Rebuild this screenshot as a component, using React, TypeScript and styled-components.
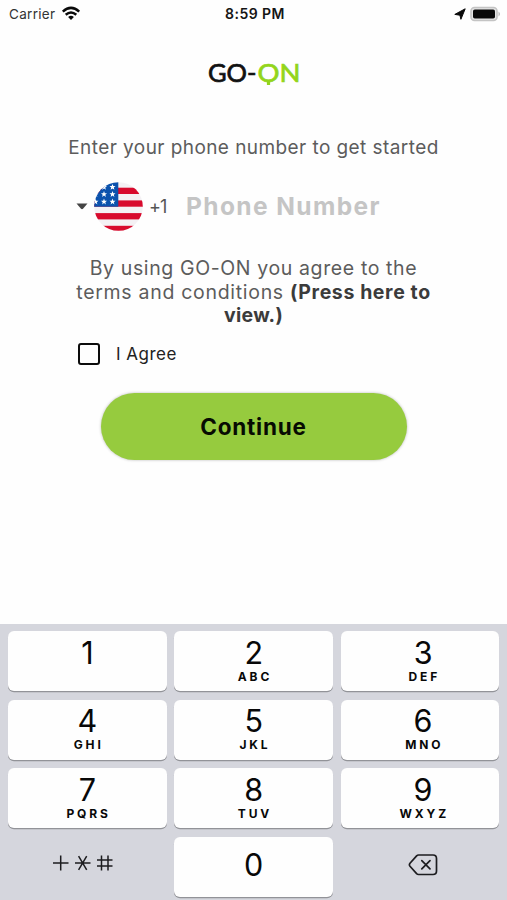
import React from "react";
import styled, { createGlobalStyle } from "styled-components";

const Global = createGlobalStyle`
  * { box-sizing: border-box; }
  body { margin: 0; background: #fefefe; font-family: Inter, "Liberation Sans", sans-serif; }
`;

const Screen = styled.div`
  width: 507px;
  height: 900px;
  display: flex;
  flex-direction: column;
  overflow: hidden;
  background: #fefefe;
`;

const StatusBar = styled.header`
  height: 28px;
  display: grid;
  grid-template-columns: 1fr auto 1fr;
  align-items: center;
  padding: 0 6px 0 9px;
  font-size: 13.5px;
  color: #151515;
`;

const StatusGroup = styled.div<{ $end?: boolean }>`
  display: flex;
  align-items: center;
  gap: ${(p) => (p.$end ? 4 : 6)}px;
  padding-bottom: 1px;
  justify-content: ${(p) => (p.$end ? "flex-end" : "flex-start")};
`;

const Carrier = styled.span`
  color: #333;
  letter-spacing: 0.3px;
`;

const Clock = styled.span`
  padding-bottom: 1px;
  font-size: 14px;
  font-weight: 600;
  letter-spacing: 0.45px;
`;

const Form = styled.main`
  flex: 1;
  display: flex;
  flex-direction: column;
  align-items: center;
`;

const Logo = styled.svg`
  display: block;
  margin-top: 30px;
`;

const Prompt = styled.p`
  margin: 46px 0 0;
  height: 24px;
  line-height: 24px;
  font-size: 19px;
  letter-spacing: 0.43px;
  font-weight: 400;
  color: #5c5c5c;
  white-space: nowrap;
`;

const PhoneRow = styled.div`
  width: 353px;
  height: 50px;
  margin-top: 21px;
  display: flex;
  align-items: center;
`;

const Caret = styled.svg`
  margin-left: -1px;
`;

const Flag = styled.svg`
  margin: 0 6px 0 6px;
`;

const DialCode = styled.span`
  width: 37px;
  font-size: 18px;
  letter-spacing: -1px;
  color: #555;
`;

const PhoneInput = styled.input`
  width: 230px;
  padding: 0;
  border: 0;
  outline: 0;
  background: transparent;
  font: 700 24.5px Inter, sans-serif;
  letter-spacing: 1.4px;
  &::placeholder { color: #c5c5c5; opacity: 1; }
`;

const Terms = styled.p`
  margin: 26px 0 0;
  text-align: center;
  font-size: 19.5px;
  line-height: 23.7px;
  color: #5c5c5c;
  white-space: nowrap;
`;

const TermsLine = styled.span<{ $spacing: number }>`
  display: block;
  letter-spacing: ${(p) => p.$spacing}px;
`;

const TermsLink = styled.b<{ $spacing: number }>`
  color: #3b3b3b;
  font-weight: 700;
  letter-spacing: ${(p) => p.$spacing}px;
`;

const AgreeRow = styled.label`
  width: 351px;
  height: 24px;
  margin-top: 14px;
  display: flex;
  align-items: center;
  gap: 16px;
  font-size: 17px;
  letter-spacing: 0.5px;
  color: #222;
`;

const Checkbox = styled.span`
  width: 22px;
  height: 22px;
  border: 2px solid #0c0c0c;
  border-radius: 3px;
`;

const ContinueButton = styled.button`
  width: 306px;
  height: 67px;
  margin-top: 27px;
  padding: 0;
  border: 0;
  border-radius: 34px;
  background: #96cb3e;
  box-shadow: 0 0 3px rgba(0, 0, 0, 0.28);
  font: 700 22.5px Inter, sans-serif;
  letter-spacing: 0.8px;
  color: #070b02;
`;

const Keypad = styled.section`
  height: 276px;
  padding: 7px 7.5px 0 8px;
  display: grid;
  grid-template-columns: repeat(3, 1fr);
  grid-auto-rows: 60px;
  gap: 8.6px 7.5px;
  background: #d5d6dd;
`;

const Key = styled.button<{ $plain?: boolean; $center?: boolean }>`
  display: flex;
  flex-direction: column;
  align-items: center;
  justify-content: ${(p) => (p.$center ? "center" : "flex-start")};
  padding: ${(p) => (p.$center ? "0 0 4px" : "3.5px 0 0")};
  border: 0;
  border-radius: 6px;
  font-family: Inter, sans-serif;
  color: #080808;
  background: ${(p) => (p.$plain ? "transparent" : "#fefefe")};
  box-shadow: ${(p) => (p.$plain ? "none" : "0 1.2px 0 #929398")};
  &:nth-child(3n) { padding-left: 6px; }
`;

const Digit = styled.span`
  font-size: 30.5px;
  line-height: 35px;
`;

const Letters = styled.span`
  margin-left: 2.5px;
  font-size: 12px;
  line-height: 14px;
  font-weight: 700;
  letter-spacing: 2.9px;
`;

const keys: [string, string][] = [
  ["1", ""], ["2", "ABC"], ["3", "DEF"],
  ["4", "GHI"], ["5", "JKL"], ["6", "MNO"],
  ["7", "PQRS"], ["8", "TUV"], ["9", "WXYZ"],
];

const WifiIcon = () => (
  <svg width="20" height="15" viewBox="0 0 19 15" fill="none" stroke="#0a0a0a" strokeWidth="2.5">
    <path d="M1.3 5.6Q9.5-1.8 17.7 5.6" />
    <path d="M4.2 8.7Q9.5 4.2 14.8 8.7" />
    <path d="M6.6 10.9Q9.5 8.7 12.4 10.9L9.5 14Z" fill="#0a0a0a" stroke="none" />
  </svg>
);

const LocationIcon = () => (
  <svg width="12" height="12" viewBox="0 0 12 12">
    <path d="M11.2.8 6.9 11.3 5.9 7.2.8 6.4Z" fill="#0a0a0a" stroke="#0a0a0a" strokeWidth="1" strokeLinejoin="round" />
  </svg>
);

const BatteryIcon = () => (
  <svg width="31" height="16" viewBox="0 0 31 16">
    <rect x="1" y="1.5" width="26" height="13" rx="3.5" fill="#e4e4e4" stroke="#c4c4c4" strokeWidth="1.6" />
    <rect x="3" y="3.5" width="22" height="9" rx="1.8" fill="#080808" />
    <path d="M28.5 5.6Q31.5 8 28.5 10.4Z" fill="#b8b8b8" />
  </svg>
);

const GoOnLogo = () => (
  <Logo width="94" height="32" viewBox="0 0 94 32" fontFamily="Lato, sans-serif" fontSize="25.5" fontWeight="400" strokeWidth="0.7">
    <text x="1" y="24.2" textLength="48.5" lengthAdjust="spacingAndGlyphs" fill="#111" stroke="#111">GO-</text>
    <text x="50.5" y="24.2" textLength="43" lengthAdjust="spacingAndGlyphs" fill="#93d51b" stroke="#93d51b">ON</text>
    <path d="M61.5 22.5V27" stroke="#93d51b" strokeWidth="3.2" />
  </Logo>
);

const star = "M0-3.1.8-.9 3-.9 1.3.5 1.9 2.7 0 1.4-1.9 2.7-1.3.5-3-.9-.8-.9Z";
const stars = [[10, 5], [18.5, 5], [1.5, 12.2], [10, 12.2], [18.5, 12.2], [1.5, 19.7], [10, 19.7], [18.5, 19.7]];

const UsFlag = () => (
  <Flag width="49" height="49" viewBox="0 0 49 49">
    <defs><clipPath id="flagCircle"><circle cx="24.5" cy="24.5" r="24.3" /></clipPath></defs>
    <g clipPath="url(#flagCircle)">
      <rect width="49" height="49" fill="#f4f1f4" />
      {[5.7, 18.4, 31.1, 43.8].map((y) => (
        <rect key={y} y={y} width="49" height="6.3" fill="#d80a2d" />
      ))}
      <rect width="24.3" height="24.7" fill="#0b52ad" />
      {stars.map(([x, y]) => (
        <path key={`${x}-${y}`} d={star} transform={`translate(${x} ${y})`} fill="#fff" />
      ))}
    </g>
  </Flag>
);

const Symbols = styled.svg`
  margin: 0 8px 4px 0;
`;

const SymbolsIcon = () => (
  <Symbols width="60" height="18" viewBox="0 0 60 18" fill="none" stroke="#1c1c1f" strokeWidth="1.5">
    <path d="M0 9H15.5M7.7 1.5V16.5" />
    <path d="M22 9H37.5M25.6 2.2 33.7 15.8M33.7 2.2 25.6 15.8" />
    <path d="M44 6H59.5M44 12H59.5M48.5 1.5V16.5M55 1.5V16.5" />
  </Symbols>
);

const DeleteIcon = () => (
  <svg width="30" height="22" viewBox="0 0 30 22" fill="none" stroke="#1c1c1f" strokeWidth="1.7" strokeLinejoin="round" strokeLinecap="round">
    <path d="M10.5 1H25Q28.5 1 28.5 4.5V17Q28.5 20.5 25 20.5H10.5Q9.5 20.5 8.6 19.6L2 12.3Q.8 10.8 2 9.3L8.6 1.9Q9.5 1 10.5 1Z" />
    <path d="M13.8 6.7 22 14.9M22 6.7 13.8 14.9" />
  </svg>
);

export default function App() {
  return (
    <Screen>
      <Global />
      <StatusBar>
        <StatusGroup><Carrier>Carrier</Carrier><WifiIcon /></StatusGroup>
        <Clock>8:59 PM</Clock>
        <StatusGroup $end><LocationIcon /><BatteryIcon /></StatusGroup>
      </StatusBar>
      <Form>
        <GoOnLogo />
        <Prompt>Enter your phone number to get started</Prompt>
        <PhoneRow>
          <Caret width="12" height="7" viewBox="0 0 12 7"><path d="M.5.5H11.5L7 5.8Q6 6.6 5 5.8Z" fill="#444" /></Caret>
          <UsFlag />
          <DialCode>+1</DialCode>
          <PhoneInput type="tel" placeholder="Phone Number" />
        </PhoneRow>
        <Terms>
          <TermsLine $spacing={0.62}>By using GO-ON you agree to the</TermsLine>
          <TermsLine $spacing={0.7}>terms and conditions <TermsLink $spacing={0.6}>(Press here to</TermsLink></TermsLine>
          <TermsLine $spacing={0}><TermsLink $spacing={0.3}>view.)</TermsLink></TermsLine>
        </Terms>
        <AgreeRow><Checkbox role="checkbox" aria-checked="false" />I Agree</AgreeRow>
        <ContinueButton>Continue</ContinueButton>
      </Form>
      <Keypad>
        {keys.map(([digit, letters]) => (
          <Key key={digit}>
            <Digit>{digit}</Digit>
            {letters && <Letters>{letters}</Letters>}
          </Key>
        ))}
        <Key $plain $center aria-label="Symbols"><SymbolsIcon /></Key>
        <Key $center><Digit>0</Digit></Key>
        <Key $plain $center aria-label="Delete"><DeleteIcon /></Key>
      </Keypad>
    </Screen>
  );
}
